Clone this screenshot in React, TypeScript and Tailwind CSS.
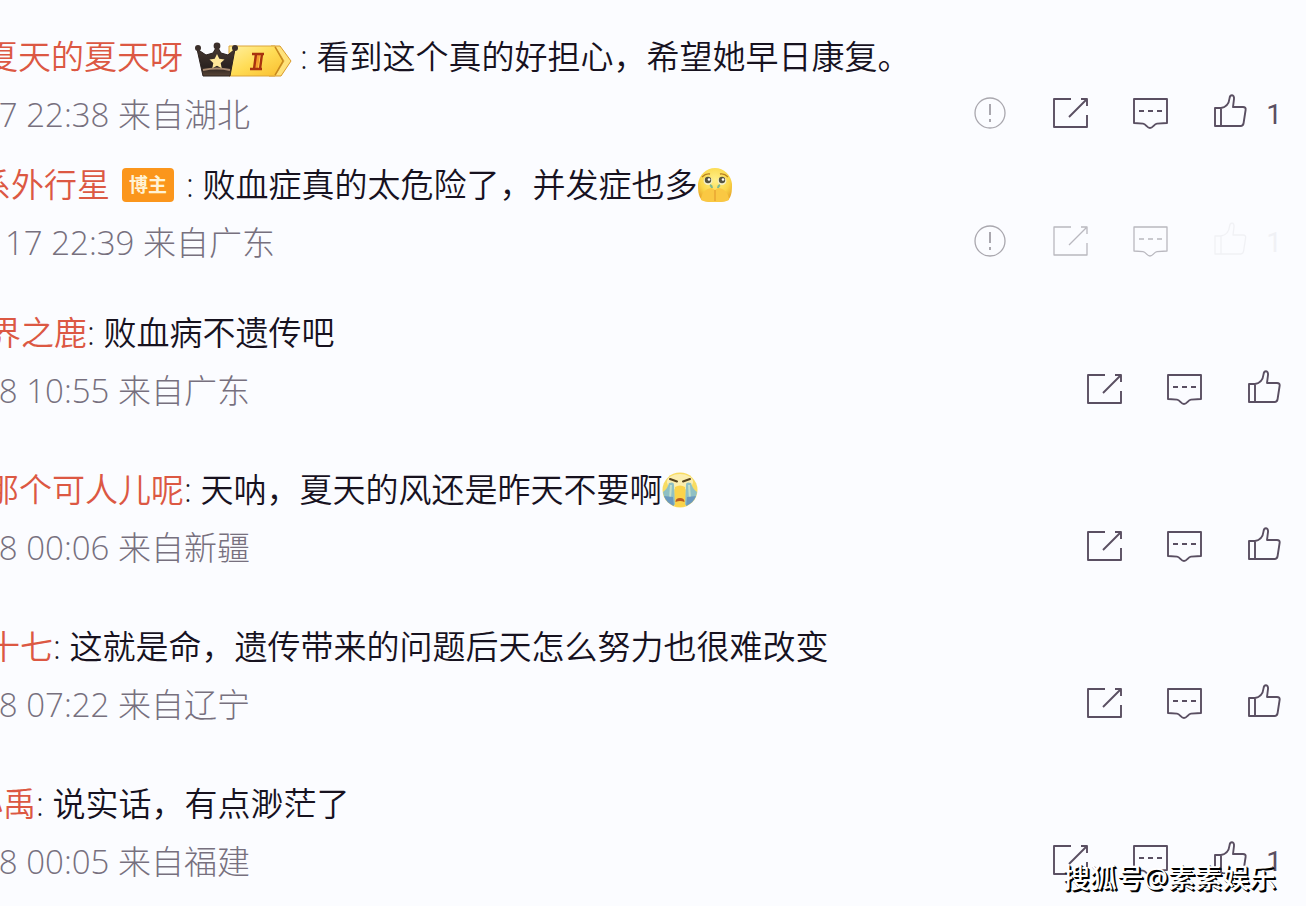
import type { ReactNode } from "react";
import clsx from "clsx";

type Tone = "normal" | "faded";

interface Comment {
  id: number;
  name: string;
  nameWidth: string;
  spacing: string;
  badge?: ReactNode;
  text: string;
  emoji?: ReactNode;
  meta: string;
  metaWidth: string;
  report?: boolean;
  likes?: number;
  tone?: Tone;
}

function CrownBadge() {
  return (
    <svg viewBox="0 -6 97 42" className="mr-2 ml-3 h-[42px] w-[97px] shrink-0" role="img" aria-label="II">
      <defs>
        <linearGradient id="gold" x1="0" y1="0" x2="1" y2="1">
          <stop offset="0" stopColor="#fff0a0" />
          <stop offset="0.5" stopColor="#ffdc55" />
          <stop offset="1" stopColor="#f9bd2e" />
        </linearGradient>
        <linearGradient id="crown" x1="0" y1="0" x2="0" y2="1">
          <stop offset="0" stopColor="#4a3b33" />
          <stop offset="0.7" stopColor="#2a2220" />
          <stop offset="1" stopColor="#5a4636" />
        </linearGradient>
      </defs>
      <path d="M76 4h9l11 15-10 15H74z" fill="#ffe27a" stroke="#d99a2b" strokeWidth="1" />
      <path d="M34 4h46l9 15-9 15H34z" fill="url(#gold)" stroke="#dca53a" strokeWidth="1" />
      <path d="M80 5l8 14-8 14" fill="none" stroke="#c5861d" strokeWidth="1.4" />
      <path
        d="M2 7l9 6 7-2 4-7 4 7 7 2 7-6-5 27H8z"
        fill="url(#crown)"
        stroke="#2b211e"
        strokeWidth="1"
        strokeLinejoin="round"
      />
      <circle cx="3" cy="6" r="3" fill="#3b2f2a" />
      <circle cx="22" cy="4" r="3.4" fill="#3b2f2a" />
      <circle cx="40" cy="6" r="3" fill="#3b2f2a" />
      <path d="M8 28q14-3 27 0" fill="none" stroke="#a98a70" strokeWidth="1.8" />
      <path
        d="M22 12l2.3 4.8 5.2.6-3.800 3.7 1 5.2-4.700-2.600-4.700 2.600 1-5.200-3.800-3.700 5.200-.6z"
        fill="#ffe79a"
      />
      <path d="M61 13h4l-2 13h-4z" fill="#f59a2e" />
      <path d="M57 12h12M55 27h12M61 12l-2 15M67 12l-2 15" fill="none" stroke="#a8320f" strokeWidth="2.4" />
    </svg>
  );
}

function BloggerBadge() {
  return (
    <span className="mx-3 flex h-[34px] w-[52px] shrink-0 items-center justify-center rounded bg-[#fb961c] text-[19px] leading-none font-bold text-[#fff3d6]">
      博主
    </span>
  );
}

function TouchedEmoji() {
  return (
    <svg viewBox="0 0 36 36" className="size-9" role="img" aria-label="泪目">
      <defs>
        <radialGradient id="face" cx="0.5" cy="0.35" r="0.65">
          <stop offset="0" stopColor="#fff08a" />
          <stop offset="0.65" stopColor="#fbd84a" />
          <stop offset="1" stopColor="#e9aa2c" />
        </radialGradient>
      </defs>
      <path
        d="M18 1C9 1 2 8 1 17c0 6 0 12 4 16 4 2 9 2 13 2s9 0 13-2c4-4 4-10 4-16C34 8 27 1 18 1z"
        fill="url(#face)"
      />
      <path d="M5 10q4-4 8-3M23 7q4-1 8 3" fill="none" stroke="#b98220" strokeWidth="1.3" />
      <ellipse cx="11" cy="14" rx="4.4" ry="4" fill="#f3efc6" />
      <ellipse cx="25" cy="14" rx="4.4" ry="4" fill="#f3efc6" />
      <circle cx="11" cy="13" r="3.2" fill="#55533f" />
      <circle cx="25" cy="13" r="3.2" fill="#55533f" />
      <circle cx="12" cy="12.500" r="1.3" fill="#fff" />
      <circle cx="26" cy="12.500" r="1.3" fill="#fff" />
      <path d="M13 18q2 1 2 3M23 18q-2 1-2 3" fill="none" stroke="#7fb98f" strokeWidth="2" />
      <path
        d="M4 33c0-7 5-12 11-12l3 2 3-2c6 0 11 5 11 12-4 2-9 2-14 2s-10 0-14-2z"
        fill="#fac843"
      />
      <path d="M18 23v11" fill="none" stroke="#e59d2f" strokeWidth="1.2" />
    </svg>
  );
}

function CryingEmoji() {
  return (
    <svg viewBox="0 0 36 36" className="size-9" role="img" aria-label="大哭">
      <circle cx="18" cy="18" r="17.5" fill="#f8dc63" />
      <ellipse cx="18" cy="10" rx="13" ry="8" fill="#fbeeb0" />
      <path d="M7 11c3-1 5-1 5 2l1 20C6 31 2 27 1 20c3-2 5-5 6-9z" fill="#8fc0c4" />
      <path d="M29 11c-3-1-5-1-5 2l-1 20c7-2 11-6 12-13-3-2-5-5-6-9z" fill="#8fc0c4" />
      <path d="M9 13l-1 14M27 13l1 14" stroke="#c3dfc9" strokeWidth="2" />
      <path d="M2 24c2 5 5 8 10 10l-1-9zM34 24c-2 5-5 8-10 10l1-9z" fill="#6a99bf" />
      <path d="M8 7l7 2.500M28 7l-7 2.500" stroke="#56431f" strokeWidth="2" strokeLinecap="round" />
      <path d="M13 15q5-3 10 0v19q-5 2-10 0z" fill="#fbd34a" />
      <path d="M13.500 30q0-4 4.500-4t4.500 4q-4.500-2-9 0z" fill="#b9591f" />
    </svg>
  );
}

interface IconProps {
  label: string;
  children: ReactNode;
}

function Icon({ label, children }: IconProps) {
  return (
    <svg
      viewBox="0 0 36 40"
      className="h-10 w-9"
      fill="none"
      stroke="currentColor"
      strokeLinejoin="round"
      role="img"
      aria-label={label}
    >
      {children}
    </svg>
  );
}

function Actions({ report, likes, tone = "normal" }: Pick<Comment, "report" | "likes" | "tone">) {
  const faded = tone === "faded";
  return (
    <div
      className={clsx(
        "flex shrink-0 gap-11 pr-6",
        faded ? "stroke-[1.3] text-[#b9b8bf]" : "stroke-[1.9] text-[#5a4f62]"
      )}
    >
      {report && (
        <button type="button" className="h-10 w-9 text-[#a9a7ae]">
          <Icon label="举报">
            <circle cx="18" cy="20" r="15" strokeWidth="1.3" />
            <path d="M18 11v11M18 26v3" strokeWidth="2" />
          </Icon>
        </button>
      )}
      <button type="button" className="h-10 w-9">
        <Icon label="转发">
          <path d="M19 6H2v28h33V22" />
          <path d="M17 24L34 7M29 6h6v7" />
        </Icon>
      </button>
      <button type="button" className="h-10 w-9">
        <Icon label="评论">
          <path d="M2 6h33v24l-10 .6c-3 .4-4 4.400-7 4.400s-4-4-7-4.400L2 30z" />
          <path d="M7 18h5M16 18h5M25 18h5" />
        </Icon>
      </button>
      <button type="button" className={clsx("flex h-10", faded && "opacity-15")}>
        <Icon label="赞">
          <path d="M3 15h6v18H3zM9 15c6-1 8-5 8.500-9.500C18 1 22.500 1 22 6l-1 8h10c2 0 3 1 2.600 3l-2 13c-.3 2-1 3-3 3H9z" />
        </Icon>
        {likes !== undefined && (
          <span className="w-[34px] text-right font-[Roboto,sans-serif] text-[28px] leading-[44px]">
            {likes}
          </span>
        )}
      </button>
    </div>
  );
}

// name and meta boxes are right aligned, so long values run off the left edge
const comments: Comment[] = [
  {
    id: 1,
    name: "夏天的夏天呀",
    nameWidth: "w-[183px]",
    spacing: "mt-[35px]",
    badge: <CrownBadge />,
    text: "看到这个真的好担心，希望她早日康复。",
    meta: "7 22:38 来自湖北",
    metaWidth: "w-[250px]",
    report: true,
    likes: 1,
  },
  {
    id: 2,
    name: "系外行星",
    nameWidth: "w-[110px]",
    spacing: "mt-[26px]",
    badge: <BloggerBadge />,
    text: "败血症真的太危险了，并发症也多",
    emoji: <TouchedEmoji />,
    meta: "17 22:39 来自广东",
    metaWidth: "w-[275px]",
    report: true,
    likes: 1,
    tone: "faded",
  },
  {
    id: 3,
    name: "界之鹿",
    nameWidth: "w-[87px]",
    spacing: "mt-[46px]",
    text: "败血病不遗传吧",
    meta: "8 10:55 来自广东",
    metaWidth: "w-[250px]",
  },
  {
    id: 4,
    name: "那个可人儿呢",
    nameWidth: "w-[184px]",
    spacing: "mt-[55px]",
    text: "天呐，夏天的风还是昨天不要啊",
    emoji: <CryingEmoji />,
    meta: "8 00:06 来自新疆",
    metaWidth: "w-[250px]",
  },
  {
    id: 5,
    name: "十七",
    nameWidth: "w-[53px]",
    spacing: "mt-[55px]",
    text: "这就是命，遗传带来的问题后天怎么努力也很难改变",
    meta: "8 07:22 来自辽宁",
    metaWidth: "w-[250px]",
  },
  {
    id: 6,
    name: "小禹",
    nameWidth: "w-[36px]",
    spacing: "mt-[55px]",
    text: "说实话，有点渺茫了",
    meta: "8 00:05 来自福建",
    metaWidth: "w-[250px]",
    likes: 1,
  },
];

function CommentItem({ comment }: { comment: Comment }) {
  const { name, nameWidth, spacing, badge, text, emoji, meta, metaWidth } = comment;
  return (
    <li className={clsx("whitespace-nowrap", spacing)}>
      <div className="flex h-11 items-center text-[33px] leading-[44px] font-[350] text-[#17121f]">
        <div className={clsx("flex shrink-0 justify-end overflow-hidden", nameWidth)}>
          <a href="#user" className="text-[#dc5843]">
            {name}
          </a>
        </div>
        {badge}
        <p className="whitespace-pre">{`: ${text}`}</p>
        {emoji}
      </div>
      <div className="mt-3.5 flex h-11 items-start justify-between">
        <div className={clsx("flex shrink-0 justify-end overflow-hidden", metaWidth)}>
          <p className="text-[33px] leading-[44px] font-light text-[#77707e]">{meta}</p>
        </div>
        <Actions report={comment.report} likes={comment.likes} tone={comment.tone} />
      </div>
    </li>
  );
}

export default function App() {
  return (
    <main
      lang="zh-CN"
      className="relative flow-root min-h-screen overflow-hidden bg-[#fbfcff] font-['Open_Sans','Noto_Sans_CJK_SC',sans-serif]"
    >
      <ul>
        {comments.map((comment) => (
          <CommentItem key={comment.id} comment={comment} />
        ))}
      </ul>
      <p className="absolute right-[30px] bottom-2 text-[27px] leading-10 font-medium text-white [text-shadow:1px_1px_0_#000,2px_2px_0_#000]">
        搜狐号@素素娱乐
      </p>
    </main>
  );
}
